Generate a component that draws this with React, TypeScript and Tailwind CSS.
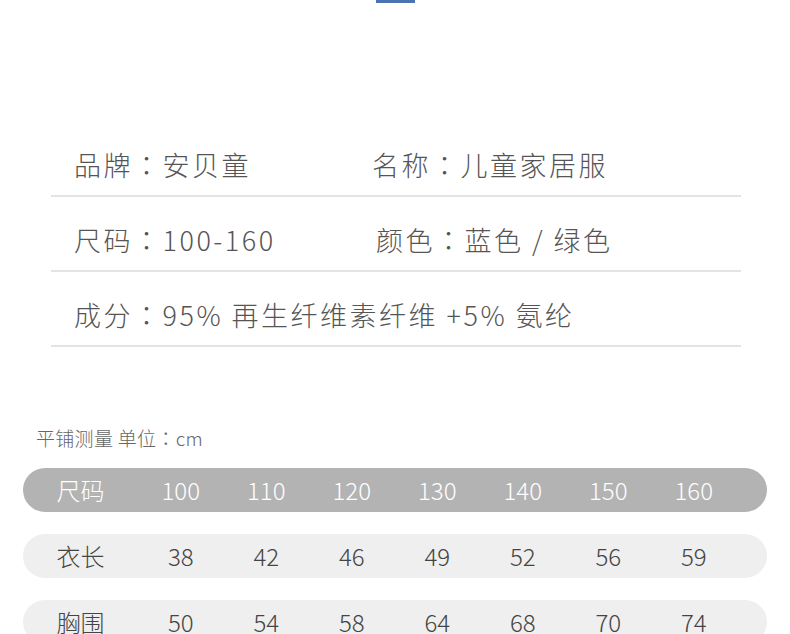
import React from 'react'

const infoRows = [
    [{ label: '品牌', value: '安贝童' }, { label: '名称', value: '儿童家居服' }],
    [{ label: '尺码', value: '100-160' }, { label: '颜色', value: '蓝色 / 绿色' }],
    [{ label: '成分', value: '95% 再生纤维素纤维 +5% 氨纶' }],
];

const sizes = ['100', '110', '120', '130', '140', '150', '160'];

const measureRows = [
    { name: '衣长', values: ['38', '42', '46', '49', '52', '56', '59'] },
    { name: '胸围', values: ['50', '54', '58', '64', '68', '70', '74'] },
];

const font = { fontFamily: '"Noto Sans CJK SC", "Noto Sans", sans-serif' };
// centred full-width colon, like the reference
const colonFont = { fontFamily: '"Noto Sans CJK JP", sans-serif' };

const App = () => {
    return (
        <div className="w-[790px] h-[634px] bg-white overflow-hidden" style={font}>
            <div className="flex justify-center">
                <div className="w-[39px] h-[3px] bg-[#4a73b2] ml-[1px]" />
            </div>

            <div className="mt-[119px] ml-[51px] w-[690px]">
                {infoRows.map((row, i) => (
                    <div key={i} className="h-[75px] flex items-center pt-[14px] border-b-2 border-[#e4e4e4]">
                        {row.map((item, j) => (
                            <div
                                key={j}
                                className={j === 0 ? 'pl-[23px] w-[321px] shrink-0' : (i === 1 ? 'pl-[4px]' : '')}
                            >
                                <span className="text-[27px] leading-[30px] tracking-[2.5px] font-light text-[#555] whitespace-nowrap">
                                    {item.label}<span style={colonFont}>：</span>{item.value}
                                </span>
                            </div>
                        ))}
                    </div>
                ))}
            </div>

            <div className="mx-[23px] mt-[79px]">
                <p className="ml-[13px] text-[19px] leading-[24px] tracking-[0.3px] font-light text-[#666]">
                    平铺测量 单位<span style={colonFont}>：</span>cm
                </p>

                <div className="mt-[18px] h-[44px] rounded-full bg-[#b3b3b3] grid grid-cols-[115px_repeat(7,85.5px)] items-center text-white text-[24px] font-light">
                    <span className="text-center">尺码</span>
                    {sizes.map((s) => (
                        <span key={s} className="text-center">{s}</span>
                    ))}
                </div>

                {measureRows.map((row) => (
                    <div
                        key={row.name}
                        className="mt-[22px] h-[44px] rounded-full bg-[#efefef] grid grid-cols-[115px_repeat(7,85.5px)] items-center text-[#444] text-[24px] font-light"
                    >
                        <span className="text-center">{row.name}</span>
                        {row.values.map((v, k) => (
                            <span key={k} className="text-center">{v}</span>
                        ))}
                    </div>
                ))}
            </div>
        </div>
    );
};

export default App
